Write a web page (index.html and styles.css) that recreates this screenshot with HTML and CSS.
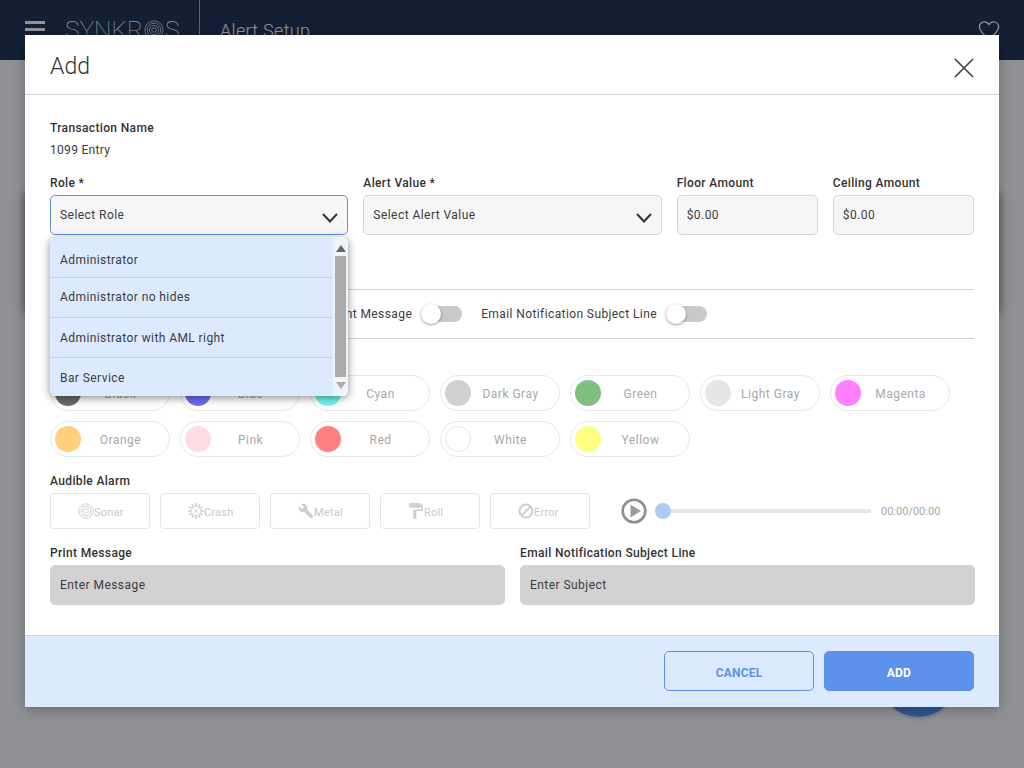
FILE: index.html
```html
<!DOCTYPE html>
<html lang="en">
<head>
<meta charset="utf-8">
<title>Alert Setup</title>
<link rel="stylesheet" href="styles.css">
</head>
<body>
<div class="app">
  <header class="topbar">
    <div class="burger"><span></span><span></span><span></span></div>
    <div class="logo">SYNKR<svg class="logo-o" viewBox="0 0 22 22"><circle cx="11" cy="11" r="10"/><circle cx="11" cy="11" r="7.5"/><circle cx="11" cy="11" r="5"/><circle cx="11" cy="11" r="2.5"/></svg>S</div>
    <div class="page-title">Alert Setup</div>
    <svg class="heart" viewBox="0 0 24 24"><path d="M12 21C5 15 1.500 11.500 1.500 7.500 1.500 4.300 4 2 7 2c2 0 3.800 1 5 3 1.200-2 3-3 5-3 3 0 5.500 2.300 5.500 5.500 0 4-3.500 7.500-10.500 13.500z"/></svg>
  </header>
  <main class="page"><div class="bg-card"></div></main>
  <div class="fab"></div>
  <div class="scrim"></div>

  <section class="modal">
    <div class="modal-head">
      <h1 class="modal-title">Add</h1>
      <svg class="close" viewBox="0 0 20 20"><path d="M1 1l18 18M19 1L1 19"/></svg>
    </div>
    <div class="modal-body">
      <div class="label">Transaction Name</div>
      <div class="value">1099 Entry</div>

      <div class="fields">
        <div class="field">
          <div class="label">Role *</div>
          <div class="control select focused">Select Role<svg class="chev" viewBox="0 0 16 10"><path d="M1 1l7 7.500L15 1"/></svg></div>
          <div class="dropdown">
            <ul class="options">
              <li class="first">Administrator</li>
              <li class="second">Administrator no hides</li>
              <li>Administrator with AML right</li>
              <li>Bar Service</li>
            </ul>
            <div class="scrollbar">
              <span class="arrow-up"></span>
              <span class="thumb"></span>
              <span class="arrow-down"></span>
            </div>
          </div>
        </div>
        <div class="field">
          <div class="label">Alert Value *</div>
          <div class="control select">Select Alert Value<svg class="chev" viewBox="0 0 16 10"><path d="M1 1l7 7.500L15 1"/></svg></div>
        </div>
        <div class="field">
          <div class="label">Floor Amount</div>
          <div class="control">$0.00</div>
        </div>
        <div class="field">
          <div class="label">Ceiling Amount</div>
          <div class="control">$0.00</div>
        </div>
      </div>

      <div class="toggles">
        <div class="toggle-item">Print Message<span class="toggle"><span class="knob"></span></span></div>
        <div class="toggle-item">Email Notification Subject Line<span class="toggle"><span class="knob"></span></span></div>
      </div>

      <div class="label colors-label">Color</div>
      <div class="chips">
        <div class="chip"><span class="dot c-black"></span><span class="chip-text">Black</span></div>
        <div class="chip"><span class="dot c-blue"></span><span class="chip-text">Blue</span></div>
        <div class="chip"><span class="dot c-cyan"></span><span class="chip-text">Cyan</span></div>
        <div class="chip"><span class="dot c-dgray"></span><span class="chip-text">Dark Gray</span></div>
        <div class="chip"><span class="dot c-green"></span><span class="chip-text">Green</span></div>
        <div class="chip"><span class="dot c-lgray"></span><span class="chip-text">Light Gray</span></div>
        <div class="chip"><span class="dot c-magenta"></span><span class="chip-text">Magenta</span></div>
        <div class="chip"><span class="dot c-orange"></span><span class="chip-text">Orange</span></div>
        <div class="chip"><span class="dot c-pink"></span><span class="chip-text">Pink</span></div>
        <div class="chip"><span class="dot c-red"></span><span class="chip-text">Red</span></div>
        <div class="chip"><span class="dot c-white"></span><span class="chip-text">White</span></div>
        <div class="chip"><span class="dot c-yellow"></span><span class="chip-text">Yellow</span></div>
      </div>

      <div class="label alarm-label">Audible Alarm</div>
      <div class="alarm-row">
        <div class="sound">
          <svg class="ico ico-line" viewBox="0 0 16 16"><circle cx="8" cy="8" r="7.200"/><circle cx="8" cy="8" r="4.800"/><circle cx="8" cy="8" r="2.400"/></svg>Sonar
        </div>
        <div class="sound">
          <svg class="ico ico-line" viewBox="0 0 16 16"><path d="M15.800 8L11.900 9 14.800 11.900 10.800 10.800 11.900 14.800 9 11.900 8 15.800 7 11.900 4.100 14.800 5.200 10.800 1.200 11.900 4.100 9 .2 8 4.100 7 1.200 4.100 5.200 5.200 4.100 1.200 7 4.100 8 .2 9 4.100 11.900 1.200 10.800 5.200 14.800 4.100 11.900 7z"/><path d="M6.300 6.300l3.400 3.400M9.700 6.300l-3.400 3.400"/></svg>Crash
        </div>
        <div class="sound">
          <svg class="ico ico-fill" viewBox="0 0 24 24"><path d="M22.700 19l-9.100-9.100c.9-2.300.4-5-1.500-6.900-2-2-5-2.400-7.400-1.300L9 6 6 9 1.600 4.700C.4 7.100.9 10.100 2.900 12.100c1.900 1.900 4.600 2.400 6.900 1.500l9.100 9.100c.4.4 1 .4 1.400 0l2.300-2.300c.5-.4.500-1.100.1-1.400z"/></svg>Metal
        </div>
        <div class="sound">
          <svg class="ico ico-fill" viewBox="4 2 17 20"><path d="M18 4V3c0-.55-.45-1-1-1H5c-.55 0-1 .45-1 1v4c0 .55.45 1 1 1h12c.55 0 1-.45 1-1V6h1v4H9v11c0 .55.45 1 1 1h2c.55 0 1-.45 1-1v-9h8V4h-3z"/></svg>Roll
        </div>
        <div class="sound">
          <svg class="ico ico-line ico-heavy" viewBox="0 0 16 16"><circle cx="8" cy="8" r="6.500"/><path d="M3.500 12.500l9-9"/></svg>Error
        </div>
        <svg class="play" viewBox="0 0 26 26"><circle class="play-ring" cx="13" cy="13" r="11.300"/><path class="play-tri" d="M9.500 6.500L20 13 9.500 19.500z"/></svg>
        <div class="slider"><span class="slider-thumb"></span></div>
        <div class="time">00:00/00:00</div>
      </div>

      <div class="messages">
        <div class="field">
          <div class="label">Print Message</div>
          <div class="control disabled">Enter Message</div>
        </div>
        <div class="field">
          <div class="label">Email Notification Subject Line</div>
          <div class="control disabled">Enter Subject</div>
        </div>
      </div>
    </div>
    <div class="modal-foot">
      <button class="btn btn-outline" type="button">CANCEL</button>
      <button class="btn btn-solid" type="button">ADD</button>
    </div>
  </section>
</div>
</body>
</html>
```

FILE: styles.css
```css
* { box-sizing: border-box; }
html, body { margin: 0; height: 100%; }
body { font-family: Roboto, "Liberation Sans", sans-serif; color: #3c3c3c; overflow: hidden; }

.app { position: relative; width: 1024px; height: 768px; overflow: hidden; background: #fafafa; }

.topbar { height: 60px; background: #1a2c4c; color: #fff; display: flex; align-items: flex-start; position: relative; }
.burger { width: 20px; margin: 21px 0 0 25px; display: flex; flex-direction: column; gap: 4px; }
.burger span { display: block; height: 3px; background: #fff; }
.logo { margin: 14px 0 0 20px; width: 134px; height: 46px; font-size: 24.5px; font-weight: 100; letter-spacing: 0; line-height: 32px; white-space: nowrap; display: flex; align-items: flex-start; }
.logo-o { width: 20px; height: 20px; margin: 6px 1px 0; fill: none; stroke: #fff; stroke-width: .8; flex: none; }
.page-title { height: 60px; border-left: 1px solid rgba(255,255,255,.6); padding: 20px 0 0 20px; font-size: 18px; line-height: 22px; font-weight: 300; letter-spacing: .3px; }
.heart { position: absolute; left: 978px; top: 20px; width: 22px; height: 22px; fill: none; stroke: #fff; stroke-width: 1.4; }

.page { padding: 133px 25px 0; }
.bg-card { height: 120px; background: #fff; box-shadow: 0 0 10px rgba(0,0,0,.45); }
.fab { position: absolute; left: 880px; top: 640px; width: 77px; height: 77px; border-radius: 50%; background: #558ef3; box-shadow: 0 0 0 1px rgba(255,255,255,.5), 0 1px 3px rgba(0,0,0,.3); }
.scrim { position: absolute; inset: 0; background: rgba(10,15,25,.45); }

.modal { position: absolute; left: 25px; top: 35px; width: 974px; height: 672px; background: #fff; display: flex; flex-direction: column; box-shadow: 0 3px 12px rgba(0,0,0,.25); }
.modal-head { height: 60px; flex: none; border-bottom: 1px solid #cfcfcf; display: flex; justify-content: space-between; align-items: flex-start; padding: 0 25px; }
.modal-title { margin: 16px 0 0; font-size: 23px; line-height: 32px; font-weight: 300; letter-spacing: 0; color: #333; }
.close { width: 20px; height: 20px; margin-top: 23px; fill: none; stroke: #444; stroke-width: 1.7; }

.modal-body { flex: 1; padding: 26px 25px 0; }
.label { font-size: 12px; line-height: 14px; font-weight: 500; letter-spacing: .35px; color: #333; white-space: nowrap; }
.value { margin-top: 8px; font-size: 12px; line-height: 14px; letter-spacing: .3px; color: #3c3c3c; }

.fields { margin-top: 19px; display: grid; grid-template-columns: 298.33px 298.33px 1fr 1fr; column-gap: 15px; }
.field { position: relative; min-width: 0; }
.field .label { margin-bottom: 5px; }
.control { height: 40px; background: #f6f6f6; border: 1px solid #d6d6d6; border-radius: 5px; padding: 0 9px; font-size: 12px; line-height: 38px; letter-spacing: .45px; color: #3c3c3c; position: relative; }
.control.focused { border-color: #5c92eb; }
.control.disabled { background: #d2d2d2; border-color: #d2d2d2; }
.chev { position: absolute; right: 9px; top: 17px; width: 16px; height: 10px; fill: none; stroke: #333; stroke-width: 2; }

.dropdown { position: absolute; left: 0; top: 61px; width: 298px; height: 159px; z-index: 2; background: #dbeafe; border-radius: 5px; overflow: hidden; display: flex; box-shadow: 0 2px 8px rgba(0,0,0,.45); }
.options { flex: 1; margin: 0; padding: 0; list-style: none; font-size: 12px; letter-spacing: .42px; color: #3c3c3c; }
.options li { height: 40px; padding-left: 10px; line-height: 41px; border-bottom: 1px solid #c8d1dc; }
.options li.first { height: 41px; line-height: 46px; }
.options li.second { line-height: 39px; }
.options li:last-child { border-bottom: 0; }
.scrollbar { width: 15px; flex: none; background: #eff3fa; display: flex; flex-direction: column; align-items: center; padding-top: 8px; }
.arrow-up { width: 0; height: 0; border: 5px solid transparent; border-top: 0; border-bottom: 7px solid #666; }
.thumb { width: 11px; height: 121px; margin-top: 4px; background: #aaa; }
.arrow-down { width: 0; height: 0; margin-top: 5px; border: 5px solid transparent; border-bottom: 0; border-top: 7px solid #aaa; }

.toggles { margin-top: 54px; height: 50px; border-top: 1px solid #cfcfcf; border-bottom: 1px solid #cfcfcf; display: flex; align-items: center; gap: 19px; padding-left: 280px; }
.toggle-item { display: flex; align-items: center; gap: 9px; font-size: 12px; letter-spacing: .4px; color: #3c3c3c; white-space: nowrap; }
.toggle { width: 41px; height: 16px; border-radius: 8px; background: #c9c9c9; position: relative; display: block; }
.knob { position: absolute; left: 0; top: -2px; width: 20px; height: 20px; border-radius: 50%; background: #fff; box-shadow: 0 1px 3px rgba(0,0,0,.4); }

.colors-label { margin-top: 14px; }
.chips { margin-top: 8px; display: flex; flex-wrap: wrap; gap: 10px; width: 925px; }
.chip { width: 120px; height: 36px; border: 1px solid #e8e8e8; border-radius: 18px; display: flex; align-items: center; padding: 0 9px 0 4px; font-size: 12px; letter-spacing: .5px; color: #a8a8a8; }
.dot { width: 26px; height: 26px; border-radius: 50%; flex: none; }
.chip-text { flex: 1; text-align: center; white-space: nowrap; padding-top: 2px; }
.c-black { background: #6c6c6c; }
.c-blue { background: #6e6ef5; }
.c-cyan { background: #70f5ee; }
.c-dgray { background: #d0d0d0; }
.c-green { background: #7fbf7f; }
.c-lgray { background: #e6e6e6; }
.c-magenta { background: #ff80ff; }
.c-orange { background: #ffcf7a; }
.c-pink { background: #ffdce3; }
.c-red { background: #ff8080; }
.c-white { background: #fff; border: 1px solid #e6e6e6; }
.c-yellow { background: #ffff80; }

.alarm-label { margin-top: 17px; }
.alarm-row { margin-top: 5px; display: flex; align-items: center; }
.sound { width: 100px; height: 36px; margin-right: 10px; border: 1px solid #e6e6e6; border-radius: 4px; display: flex; align-items: center; padding: 2px 0 0 27px; font-size: 11px; letter-spacing: .2px; color: #c8c8c8; }
.ico { width: 16px; height: 16px; flex: none; margin-top: -2px; }
.ico-line { fill: none; stroke: #cfcfcf; stroke-width: 1; }
.ico-heavy { stroke-width: 2; }
.ico-fill { fill: #cfcfcf; }
.play { width: 26px; height: 26px; margin-left: 21px; flex: none; }
.play-ring { fill: none; stroke: #8e8e8e; stroke-width: 2.6; }
.play-tri { fill: #9c9c9c; }
.slider { position: relative; width: 216px; height: 4px; margin-left: 8px; background: #e6e6e6; border-radius: 2px; flex: none; }
.slider-thumb { position: absolute; left: 0; top: -6px; width: 16px; height: 16px; border-radius: 50%; background: #aecaf7; }
.time { margin-left: 10px; font-size: 11px; letter-spacing: 0; color: #a8a8a8; white-space: nowrap; }

.messages { margin-top: 17px; display: grid; grid-template-columns: 455px 455px; column-gap: 15px; }

.modal-foot { height: 72px; flex: none; background: #dbeafe; border-top: 1px solid #cfcfcf; display: flex; justify-content: flex-end; align-items: flex-start; gap: 10px; padding: 15px 25px 0 0; }
.btn { width: 150px; height: 40px; border-radius: 5px; font-family: inherit; font-size: 12px; font-weight: 700; letter-spacing: .2px; cursor: pointer; padding: 3px 0 0; }
.btn-outline { background: transparent; border: 1px solid #5c92eb; color: #5c92eb; }
.btn-solid { background: #5c92eb; border: 1px solid #5c92eb; color: #fff; }
```
